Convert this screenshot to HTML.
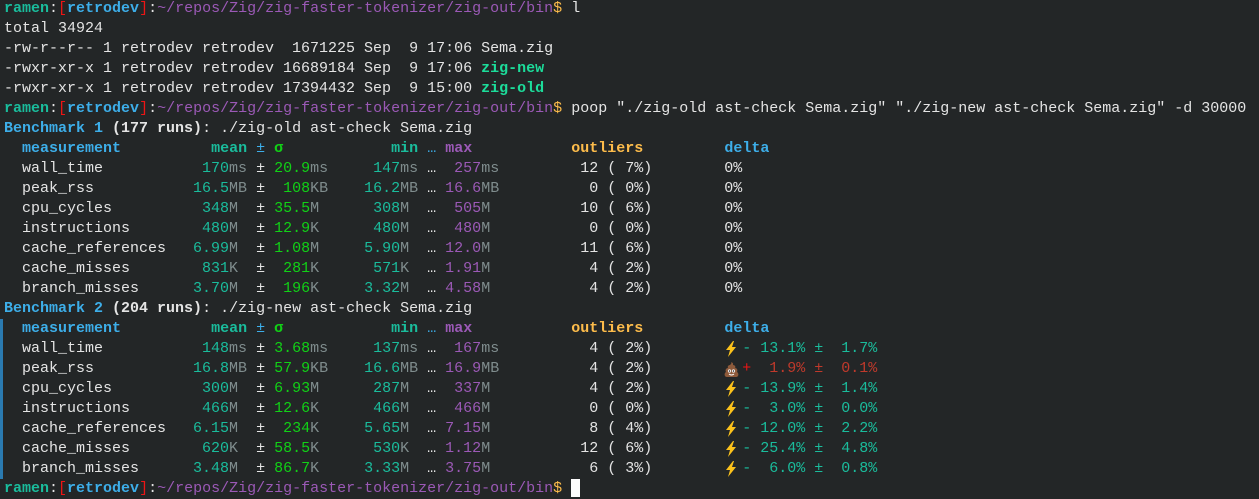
<!DOCTYPE html>
<html><head><meta charset="utf-8"><style>
html,body{margin:0;padding:0;background:#232627;width:1259px;height:497px;overflow:hidden}
#t{position:absolute;left:4px;top:-1px;font-family:"Liberation Mono","DejaVu Sans Mono",monospace;font-size:15px;line-height:20px;color:#e4e4e4}
#t div{height:20px;white-space:pre}
tl{color:#1abc9c}gr{color:#11d116}un{color:#7f8c8d}pu{color:#9b59b6}bl{color:#3daee9}rd{color:#c0392b}yl{color:#fdbc4b}
.b{font-weight:bold}.r{color:#ed1515}.ex{color:#1cdc9a;font-weight:bold}
em{display:inline-block;width:18px;height:20px;vertical-align:top;font-style:normal;position:relative}
em svg{position:absolute;left:0;top:2px}
#bar{position:absolute;left:0;top:319px;width:3px;height:160px;background:#2a7ab0}
#cur{position:absolute;left:571px;top:479px;width:9px;height:18px;background:#fcfcfc}
</style></head><body>
<div id="bar"></div>
<div id="t">
<div><tl class="b">ramen</tl>:<span class="r">[</span><bl class="b">retrodev</bl><span class="r">]</span>:<pu>~/repos/Zig/zig-faster-tokenizer/zig-out/bin</pu><yl>$</yl> l</div>
<div>total 34924</div>
<div>-rw-r--r-- 1 retrodev retrodev  1671225 Sep  9 17:06 Sema.zig</div>
<div>-rwxr-xr-x 1 retrodev retrodev 16689184 Sep  9 17:06 <span class="ex">zig-new</span></div>
<div>-rwxr-xr-x 1 retrodev retrodev 17394432 Sep  9 15:00 <span class="ex">zig-old</span></div>
<div><tl class="b">ramen</tl>:<span class="r">[</span><bl class="b">retrodev</bl><span class="r">]</span>:<pu>~/repos/Zig/zig-faster-tokenizer/zig-out/bin</pu><yl>$</yl> poop "./zig-old ast-check Sema.zig" "./zig-new ast-check Sema.zig" -d 30000</div>
<div><bl class="b">Benchmark 1</bl> <b>(177 runs)</b>: ./zig-old ast-check Sema.zig</div>
<div>  <bl class="b">measurement</bl>          <tl class="b">mean</tl> <bl>±</bl> <gr class="b">σ</gr>            <tl class="b">min</tl> <bl>…</bl> <pu class="b">max</pu>           <yl class="b">outliers</yl>         <bl class="b">delta</bl></div>
<div>  wall_time          <tl> 170</tl><un>ms</un> ± <gr>20.9</gr><un>ms</un>    <tl> 147</tl><un>ms</un> … <pu> 257</pu><un>ms</un>         12 ( 7%)        0%</div>
<div>  peak_rss           <tl>16.5</tl><un>MB</un> ± <gr> 108</gr><un>KB</un>    <tl>16.2</tl><un>MB</un> … <pu>16.6</pu><un>MB</un>          0 ( 0%)        0%</div>
<div>  cpu_cycles         <tl> 348</tl><un>M </un> ± <gr>35.5</gr><un>M </un>    <tl> 308</tl><un>M </un> … <pu> 505</pu><un>M </un>         10 ( 6%)        0%</div>
<div>  instructions       <tl> 480</tl><un>M </un> ± <gr>12.9</gr><un>K </un>    <tl> 480</tl><un>M </un> … <pu> 480</pu><un>M </un>          0 ( 0%)        0%</div>
<div>  cache_references   <tl>6.99</tl><un>M </un> ± <gr>1.08</gr><un>M </un>    <tl>5.90</tl><un>M </un> … <pu>12.0</pu><un>M </un>         11 ( 6%)        0%</div>
<div>  cache_misses       <tl> 831</tl><un>K </un> ± <gr> 281</gr><un>K </un>    <tl> 571</tl><un>K </un> … <pu>1.91</pu><un>M </un>          4 ( 2%)        0%</div>
<div>  branch_misses      <tl>3.70</tl><un>M </un> ± <gr> 196</gr><un>K </un>    <tl>3.32</tl><un>M </un> … <pu>4.58</pu><un>M </un>          4 ( 2%)        0%</div>
<div><bl class="b">Benchmark 2</bl> <b>(204 runs)</b>: ./zig-new ast-check Sema.zig</div>
<div>  <bl class="b">measurement</bl>          <tl class="b">mean</tl> <bl>±</bl> <gr class="b">σ</gr>            <tl class="b">min</tl> <bl>…</bl> <pu class="b">max</pu>           <yl class="b">outliers</yl>         <bl class="b">delta</bl></div>
<div>  wall_time          <tl> 148</tl><un>ms</un> ± <gr>3.68</gr><un>ms</un>    <tl> 137</tl><un>ms</un> … <pu> 167</pu><un>ms</un>          4 ( 2%)        <em><svg width="14" height="16" viewBox="0 0 14 16"><polygon points="9,0 2,9 6,9 4,16 12,6 8,6 10,0" fill="#fcc21b"/></svg></em><tl>- 13.1% ±  1.7%</tl></div>
<div>  peak_rss           <tl>16.8</tl><un>MB</un> ± <gr>57.9</gr><un>KB</un>    <tl>16.6</tl><un>MB</un> … <pu>16.9</pu><un>MB</un>          4 ( 2%)        <em><svg width="15" height="17" viewBox="0 0 15 17"><path d="M7 1 C10 2 9 4 9 4 C11 4 12 6 11 7 C13 7 14 9 13 11 C15 12 15 16 12 16 L3 16 C0 16 0 12 2 11 C1 9 2 7 4 7 C3 5 5 4 6 4 C7 3 8 2 7 1Z" fill="#8d5a3b"/><circle cx="5.5" cy="10" r="1.6" fill="#fff"/><circle cx="9.5" cy="10" r="1.6" fill="#fff"/><circle cx="5.5" cy="10" r=".8" fill="#222"/><circle cx="9.5" cy="10" r=".8" fill="#222"/><path d="M5 13 Q7.5 15 10 13" stroke="#fff" fill="none"/></svg></em><rd><span class="r">+</span>  1.9% ±  0.1%</rd></div>
<div>  cpu_cycles         <tl> 300</tl><un>M </un> ± <gr>6.93</gr><un>M </un>    <tl> 287</tl><un>M </un> … <pu> 337</pu><un>M </un>          4 ( 2%)        <em><svg width="14" height="16" viewBox="0 0 14 16"><polygon points="9,0 2,9 6,9 4,16 12,6 8,6 10,0" fill="#fcc21b"/></svg></em><tl>- 13.9% ±  1.4%</tl></div>
<div>  instructions       <tl> 466</tl><un>M </un> ± <gr>12.6</gr><un>K </un>    <tl> 466</tl><un>M </un> … <pu> 466</pu><un>M </un>          0 ( 0%)        <em><svg width="14" height="16" viewBox="0 0 14 16"><polygon points="9,0 2,9 6,9 4,16 12,6 8,6 10,0" fill="#fcc21b"/></svg></em><tl>-  3.0% ±  0.0%</tl></div>
<div>  cache_references   <tl>6.15</tl><un>M </un> ± <gr> 234</gr><un>K </un>    <tl>5.65</tl><un>M </un> … <pu>7.15</pu><un>M </un>          8 ( 4%)        <em><svg width="14" height="16" viewBox="0 0 14 16"><polygon points="9,0 2,9 6,9 4,16 12,6 8,6 10,0" fill="#fcc21b"/></svg></em><tl>- 12.0% ±  2.2%</tl></div>
<div>  cache_misses       <tl> 620</tl><un>K </un> ± <gr>58.5</gr><un>K </un>    <tl> 530</tl><un>K </un> … <pu>1.12</pu><un>M </un>         12 ( 6%)        <em><svg width="14" height="16" viewBox="0 0 14 16"><polygon points="9,0 2,9 6,9 4,16 12,6 8,6 10,0" fill="#fcc21b"/></svg></em><tl>- 25.4% ±  4.8%</tl></div>
<div>  branch_misses      <tl>3.48</tl><un>M </un> ± <gr>86.7</gr><un>K </un>    <tl>3.33</tl><un>M </un> … <pu>3.75</pu><un>M </un>          6 ( 3%)        <em><svg width="14" height="16" viewBox="0 0 14 16"><polygon points="9,0 2,9 6,9 4,16 12,6 8,6 10,0" fill="#fcc21b"/></svg></em><tl>-  6.0% ±  0.8%</tl></div>
<div><tl class="b">ramen</tl>:<span class="r">[</span><bl class="b">retrodev</bl><span class="r">]</span>:<pu>~/repos/Zig/zig-faster-tokenizer/zig-out/bin</pu><yl>$</yl> </div>
</div>
<div id="cur"></div>
</body></html>
